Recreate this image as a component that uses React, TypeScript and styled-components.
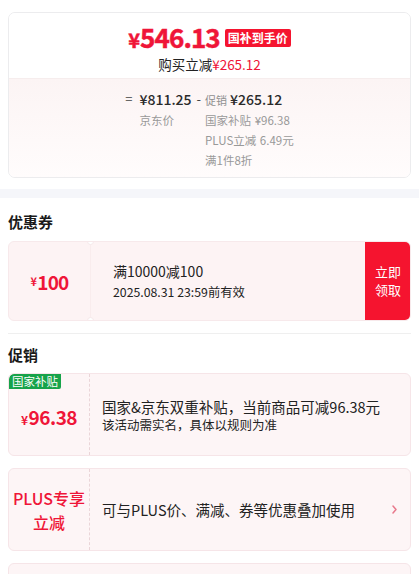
import React from "react";
import styled, { createGlobalStyle } from "styled-components";

const RED = "#ef1538";
const RED_BG = "#f5142f";
const FONT = `"Noto Sans CJK SC", "Noto Sans", sans-serif`;

const Global = createGlobalStyle`
  html, body { margin: 0; padding: 0; background: #fff; }
  body { font-family: ${FONT}; color: #1a1a1a; -webkit-font-smoothing: antialiased; }
  * { box-sizing: border-box; }
`;

const Page = styled.div`
  width: 419px;
  padding-top: 12px;
  overflow: hidden;
`;

const PriceCard = styled.div`
  margin: 0 8px;
  border: 1px solid #ececee;
  border-radius: 7px;
  overflow: hidden;
`;

const PriceTop = styled.div`
  display: flex;
  flex-direction: column;
  align-items: center;
  padding: 8px 0 5px;
  background: #fff;
`;

const PriceRow = styled.div`
  display: flex;
  align-items: center;
  height: 34px;
`;

const BigPrice = styled.span`
  color: ${RED};
  font-weight: 700;
  font-size: 26px;
  line-height: 34px;
  letter-spacing: -0.9px;
  -webkit-text-stroke: 0.5px ${RED};
`;

const Yen = styled.span<{ $size: number }>`
  font-size: ${(p) => p.$size}px;
  font-weight: 700;
  margin-right: 1px;
`;

const Badge = styled.span`
  margin-left: 5px;
  background: ${RED_BG};
  color: #fff;
  font-size: 12px;
  font-weight: 700;
  line-height: 18px;
  padding: 0 3px;
  border-radius: 2px;
`;

const SaveLine = styled.div`
  font-size: 13.5px;
  line-height: 18px;
  color: #222;
`;

const Red = styled.span`
  color: ${RED};
`;

const Breakdown = styled.div`
  display: flex;
  justify-content: center;
  align-items: flex-start;
  padding: 9px 0 7px;
  border-top: 1px solid #f6eded;
  background: linear-gradient(#fcf4f4, #fffcfc);
`;

const Op = styled.span<{ $lead?: boolean }>`
  font-size: 13px;
  line-height: 22px;
  color: #444;
  padding: ${(p) => (p.$lead ? "0 7px 0 0" : "0 4px 0 5px")};
`;

const Col = styled.div`
  display: flex;
  flex-direction: column;
`;

const AmountRow = styled.div`
  display: flex;
  align-items: baseline;
  gap: 3px;
  height: 22px;
`;

const Amount = styled.span`
  font-size: 14px;
  line-height: 22px;
  font-weight: 500;
  color: #2a2a2a;
`;

const Tag = styled.span`
  font-size: 11px;
  color: #8f8f8f;
`;

const Note = styled.span`
  font-size: 11.5px;
  line-height: 20px;
  color: #999;
  word-spacing: 1px;
`;

const Band = styled.div`
  height: 9px;
  margin-top: 11px;
  background: #f5f6fa;
`;

const Section = styled.section`
  padding: 14px 8px 0;
`;

const Heading = styled.h2`
  margin: 0 0 9px;
  font-size: 15px;
  line-height: 20px;
  font-weight: 700;
  color: #1a1a1a;
`;

const Coupon = styled.div`
  display: flex;
  height: 80px;
  border-radius: 6px;
  background: #fdf3f4;
  border: 1px solid #f7e9eb;
  overflow: hidden;
`;

const CouponValue = styled.div`
  position: relative;
  width: 82px;
  display: flex;
  align-items: center;
  justify-content: center;
  color: ${RED};
  font-weight: 700;
  font-size: 19px;
  letter-spacing: -0.8px;
  border-right: 1px solid #f9eced;
`;

const Notch = styled.span<{ $bottom?: boolean }>`
  position: absolute;
  right: -4px;
  ${(p) => (p.$bottom ? "bottom: -4px;" : "top: -4px;")}
  width: 7px;
  height: 7px;
  border-radius: 50%;
  background: #fff;
  border: 1px solid #f5e8ea;
`;

const CouponInfo = styled.div`
  flex: 1;
  display: flex;
  flex-direction: column;
  justify-content: center;
  padding-left: 22px;
  gap: 2px;
`;

const CouponTitle = styled.div`
  font-size: 14px;
  line-height: 19px;
  color: #222;
`;

const CouponDate = styled.div`
  font-size: 12.3px;
  line-height: 18px;
  color: #222;
`;

const ClaimButton = styled.button`
  width: 46px;
  border: none;
  margin: -1px -1px -1px 0;
  background: ${RED_BG};
  color: #fff;
  font-family: ${FONT};
  font-size: 13px;
  line-height: 18px;
  padding: 0 6px;
  border-radius: 0 6px 6px 0;
`;

const Divider = styled.hr`
  margin: 12px 8px 0;
  border: none;
  border-top: 1px solid #efefef;
`;

const PromoSection = styled(Section)`
  padding-top: 11px;
`;

const PromoHeading = styled(Heading)`
  margin-bottom: 8px;
`;

const PromoList = styled.div`
  display: flex;
  flex-direction: column;
  gap: 12px;
`;

const PromoCard = styled.div`
  position: relative;
  display: flex;
  align-items: center;
  height: 83px;
  border-radius: 6px;
  background: #fdf5f6;
  border: 1px solid #f6e5e8;
  overflow: hidden;
`;

const PromoLeft = styled.div`
  width: 81px;
  align-self: stretch;
  display: flex;
  flex-direction: column;
  align-items: center;
  justify-content: center;
  border-right: 1px dashed #ead5d8;
  color: ${RED};
  text-align: center;
`;

const PromoAmount = styled.div`
  font-size: 19px;
  font-weight: 700;
  letter-spacing: -0.5px;
  margin-top: 4px;
`;

const PromoLabel = styled.div`
  font-size: 16px;
  font-weight: 500;
  line-height: 24px;
`;

const GreenTag = styled.span`
  position: absolute;
  left: 0;
  top: 0;
  background: #17a34a;
  color: #fff;
  font-size: 11.5px;
  line-height: 15px;
  padding: 0 3px;
  border-radius: 5px 0 2px 0;
`;

const PromoBody = styled.div`
  flex: 1;
  padding-left: 12px;
  display: flex;
  flex-direction: column;
`;

const PromoText = styled.div`
  font-size: 14.5px;
  line-height: 19px;
  color: #222;
`;

const PromoSub = styled.div`
  font-size: 12.5px;
  line-height: 17px;
  color: #222;
`;

const Chevron = styled.svg`
  margin-right: 13px;
  flex-shrink: 0;
`;

const ArrowRight = () => (
  <Chevron width="5" height="9" viewBox="0 0 5 9">
    <path d="M1 1l3 3.5L1 8" fill="none" stroke="#e8798c" strokeWidth="1.5" strokeLinecap="round" strokeLinejoin="round" />
  </Chevron>
);

export default function App() {
  return (
    <>
      <Global />
      <Page>
        <PriceCard>
          <PriceTop>
            <PriceRow>
              <BigPrice>
                <Yen $size={20}>¥</Yen>546.13
              </BigPrice>
              <Badge>国补到手价</Badge>
            </PriceRow>
            <SaveLine>
              购买立减<Red>¥265.12</Red>
            </SaveLine>
          </PriceTop>
          <Breakdown>
            <Op $lead>=</Op>
            <Col>
              <Amount>¥811.25</Amount>
              <Note>京东价</Note>
            </Col>
            <Op>-</Op>
            <Col>
              <AmountRow>
                <Tag>促销</Tag>
                <Amount>¥265.12</Amount>
              </AmountRow>
              <Note>国家补贴 ¥96.38</Note>
              <Note>PLUS立减 6.49元</Note>
              <Note>满1件8折</Note>
            </Col>
          </Breakdown>
        </PriceCard>
        <Band />
        <Section>
          <Heading>优惠券</Heading>
          <Coupon>
            <CouponValue>
              <Yen $size={11}>¥</Yen>100
              <Notch />
              <Notch $bottom />
            </CouponValue>
            <CouponInfo>
              <CouponTitle>满10000减100</CouponTitle>
              <CouponDate>2025.08.31 23:59前有效</CouponDate>
            </CouponInfo>
            <ClaimButton>立即领取</ClaimButton>
          </Coupon>
        </Section>
        <Divider />
        <PromoSection>
          <PromoHeading>促销</PromoHeading>
          <PromoList>
            <PromoCard>
              <GreenTag>国家补贴</GreenTag>
              <PromoLeft>
                <PromoAmount>
                  <Yen $size={12}>¥</Yen>96.38
                </PromoAmount>
              </PromoLeft>
              <PromoBody>
                <PromoText>国家&amp;京东双重补贴，当前商品可减96.38元</PromoText>
                <PromoSub>该活动需实名，具体以规则为准</PromoSub>
              </PromoBody>
            </PromoCard>
            <PromoCard>
              <PromoLeft>
                <PromoLabel>PLUS专享</PromoLabel>
                <PromoLabel>立减</PromoLabel>
              </PromoLeft>
              <PromoBody>
                <PromoText>可与PLUS价、满减、券等优惠叠加使用</PromoText>
              </PromoBody>
              <ArrowRight />
            </PromoCard>
            <PromoCard />
          </PromoList>
        </PromoSection>
      </Page>
    </>
  );
}
